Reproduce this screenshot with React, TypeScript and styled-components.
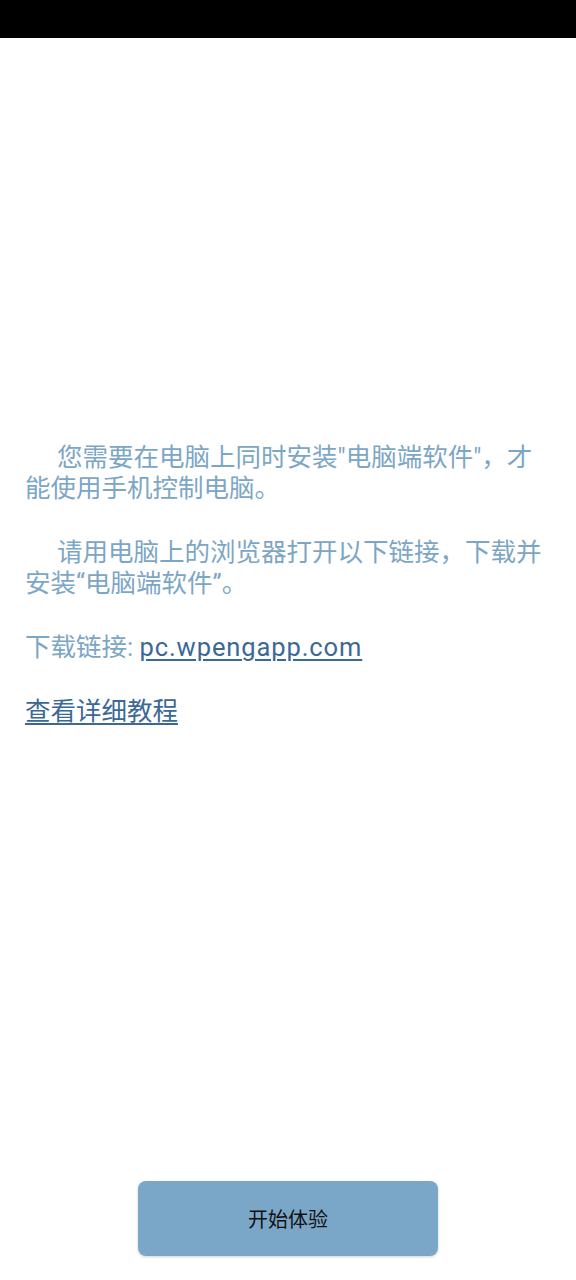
import styled, { createGlobalStyle } from "styled-components";

const GlobalStyle = createGlobalStyle`
  html, body {
    margin: 0;
    padding: 0;
    background: #ffffff;
  }
  body {
    font-family: Roboto, "Noto Sans CJK SC", sans-serif;
  }
`;

function App() {
  return (
    <>
      <GlobalStyle />
      <Page>
        <StatusBar />
        <Content>
          <Paragraph indent>
            您需要在电脑上同时安装"电脑端软件"，才能使用手机控制电脑。
          </Paragraph>
          <Paragraph indent>
            请用电脑上的浏览器打开以下链接，下载并安装“电脑端软件”。
          </Paragraph>
          <Paragraph>
            下载链接: <Link href="#" wide>pc.wpengapp.com</Link>
          </Paragraph>
          <Paragraph>
            <Link href="#">查看详细教程</Link>
          </Paragraph>
        </Content>
        <Footer>
          <StartButton>开始体验</StartButton>
        </Footer>
      </Page>
    </>
  );
}

export default App;

const Page = styled.div`
  min-height: 100vh;
  display: flex;
  flex-direction: column;
`;

const StatusBar = styled.div`
  height: 38px;
  background: #000000;
`;

const Content = styled.main`
  flex: 1;
  padding: 404px 25px 0 25px;
  display: flex;
  flex-direction: column;
  gap: 33px;
`;

const Paragraph = styled.p<{ indent?: boolean }>`
  margin: 0;
  font-size: 25.5px;
  line-height: 31px;
  color: #7ca6c5;
  text-indent: ${(p) => (p.indent ? "32px" : "0")};
`;

const Link = styled.a<{ wide?: boolean }>`
  color: #3b6996;
  text-decoration: underline;
  text-underline-offset: 3px;
  text-decoration-thickness: 1.5px;
  letter-spacing: ${(p) => (p.wide ? "0.9px" : "0")};
`;

const Footer = styled.div`
  display: flex;
  justify-content: center;
  padding-bottom: 24px;
`;

const StartButton = styled.button`
  width: 300px;
  height: 75px;
  border: none;
  border-radius: 8px;
  background: #7aa7c8;
  box-shadow: 0 1px 3px rgba(0, 0, 0, 0.18);
  color: #111111;
  font-family: Roboto, "Noto Sans CJK SC", sans-serif;
  font-size: 20px;
`;
